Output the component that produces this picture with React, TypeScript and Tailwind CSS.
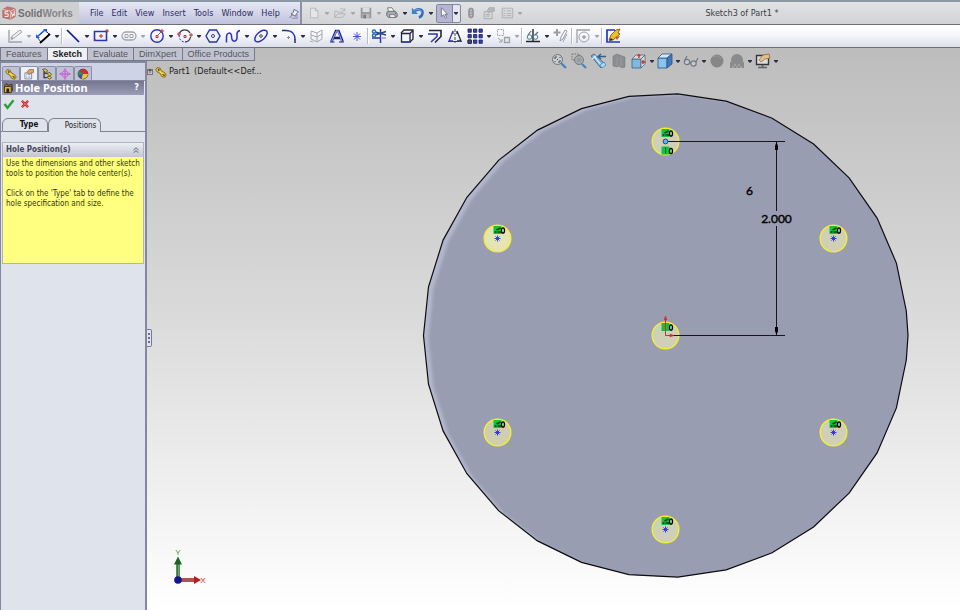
import type { ReactNode } from 'react';
import { clsx } from 'clsx';

const BLUE = '#2a35b8';
const GRAY = '#a2a4ab';

const glyphs: Record<string, ReactNode> = {
  newDoc: <path d="M4 2.5h5.5l3 3v8H4zM9.5 2.5v3h3" fill="#e6e6e8" stroke="#b4b5b9" />,
  open: (
    <g fill="none" stroke="#b0b1b5">
      <path d="M2 13V6h3l1 1h5v2M2 13l3-4h9l-3 4z" />
      <path d="M8 4c2-2 4-1 5 1M13.500 2.500v3h-3" />
    </g>
  ),
  save: (
    <g>
      <path d="M2 2h12v12H2z" fill="#96979c" />
      <path d="M4 2h8v5H4z" fill="#dcdde0" />
      <path d="M4 9h8v5H4z" fill="#b9babf" />
      <path d="M5 10h3v4H5z" fill="#77787d" />
    </g>
  ),
  print: (
    <g stroke="#55565c" strokeWidth=".8">
      <path d="M4 7l-1-5h5l3 5z" fill="#f4f5f8" />
      <path d="M2 7l3-1h7l2 3v3l-2 1H4l-2-2z" fill="#a9abb2" />
      <path d="M5 10h6l1 3H6z" fill="#fff" />
      <path d="M11.500 8.500h1" stroke="#27a" strokeWidth="1.500" />
    </g>
  ),
  undo: (
    <g fill="none">
      <path d="M4 6c4-4 10-2 9 3-.500 2-2 3.500-4 4" stroke="#2f6fb8" strokeWidth="3" />
      <path d="M1 2v7h7z" fill="#3a83cc" />
      <path d="M4 5.500c4-3 8-1.500 8 2" stroke="#8cc4f0" strokeWidth=".8" />
    </g>
  ),
  cursor: <path d="M5 2v10l2.500-2 2 4 1.500-1-2-3.500H12z" fill="#fff" stroke="#55566a" strokeWidth=".8" />,
  light: (
    <g>
      <rect x="5.500" y="2.500" width="5" height="11" rx="2" fill="#9c9da2" stroke="#85868c" />
      <path d="M7 5h2M7 8h2M7 11h2" stroke="#c6c7ca" strokeWidth="1.500" />
    </g>
  ),
  props: (
    <g fill="#d9dadd" stroke="#a6a7ac">
      <path d="M2.500 6.500h9v8h-9zM4 9.500h5M4 11.500h5" />
      <path d="M6 6l2-4h6v4h-4l-2 2z" fill="#b8b9bd" />
    </g>
  ),
  list: (
    <g fill="none" stroke="#aaabb0">
      <path d="M2.500 2.500h12v11h-12z" />
      <path d="M4 5.500h2M7.500 5.500H13M4 8.500h2M7.500 8.500H13M4 11h2M7.500 11H13" />
    </g>
  ),
  pin: (
    <g stroke="#44486a">
      <path d="M8 2l6 3-3 3-1 3-6-3 3-2z" fill="#eceef8" />
      <path d="M6 9l-4 4" fill="none" />
      <path d="M5 13.500h8M12 8v5" stroke="#777b98" fill="none" />
    </g>
  ),
  sketch: (
    <g fill="none" stroke={GRAY}>
      <path d="M2 2v12h13" strokeWidth="1.400" />
      <path d="M4 11l1-3 8-6 2 2-8 6z" fill="#eee" />
      <path d="M4 11l2-1" strokeWidth="2" />
    </g>
  ),
  dimension: (
    <g fill="none">
      <path d="M2 9l8-7 4 4-8 8z" stroke="#333653" fill="#fff" />
      <path d="M3 8l7-6" stroke="#1f5be0" strokeWidth="1.600" />
      <path d="M1 6v4h4zM8 1h4v4z" fill="#1f5be0" />
      <path d="M5 15l10-9" stroke="#000" strokeWidth="1.800" />
    </g>
  ),
  line: <path d="M2 2l12 12" stroke="#101a8c" strokeWidth="1.700" />,
  rect: (
    <g fill="none">
      <path d="M1.500 3.500h12v9h-12z" stroke={BLUE} strokeWidth="1.600" />
      <path d="M13 2h2v2h-2zM7 7h2v2H7zM1 12h2" stroke="#b03030" />
    </g>
  ),
  slot: (
    <g fill="none" stroke={GRAY}>
      <rect x="1" y="4" width="14" height="8" rx="4" strokeWidth="1.300" />
      <path d="M4 6.500h3v3H4zM9 6.500h3v3H9z" />
    </g>
  ),
  circle: (
    <g fill="none">
      <circle cx="8" cy="8" r="6.200" stroke={BLUE} strokeWidth="1.400" />
      <path d="M8 8l4.500-4.500" stroke="#666a90" />
      <path d="M7 7.500h2v2H7zM12 2h2v2h-2z" stroke="#c03030" />
    </g>
  ),
  arc: (
    <g fill="none">
      <path d="M2.500 5A6 6 0 0 1 13 5M13.500 9A6 6 0 0 1 8 14" stroke="#3a3d58" strokeWidth="1.300" />
      <path d="M2 7c0 4 2 7 6 7" stroke={BLUE} strokeDasharray="2 1.500" />
      <path d="M1 5h2v2H1zM13 6h2v2h-2zM7 7.500h2v2H7z" stroke="#b03030" />
    </g>
  ),
  polygon: (
    <g>
      <path d="M4.500 2h7L15 8l-3.500 6h-7L1 8z" fill="#eef0ff" stroke="#2a35a0" strokeWidth="1.400" />
      <circle cx="8" cy="8" r="1.500" fill="#fff" stroke="#333a78" />
    </g>
  ),
  spline: <path d="M1.500 14.500V9c0-5 5-5 5-1 0 7 5 6 5.500 2V6c0-2 .500-3 3-3.500" fill="none" stroke={BLUE} strokeWidth="1.500" />,
  ellipse: (
    <g fill="none" stroke={BLUE}>
      <ellipse cx="8" cy="8" rx="7.500" ry="4" transform="rotate(-42 8 8)" strokeWidth="1.500" />
      <circle cx="8" cy="8" r="1.300" stroke="#444" />
    </g>
  ),
  fillet: (
    <g fill="none" strokeWidth="1.500">
      <path d="M1 2.500h4M14 15v-4" stroke="#2e3046" />
      <path d="M5 2.500c6 0 9 4 9 9" stroke={BLUE} />
      <path d="M6 9.500h3M7.500 8v3" stroke="#8a8b90" strokeWidth="1" />
    </g>
  ),
  plane: (
    <g fill="none" stroke="#a6a8ae">
      <path d="M2 3l6 2v9l-6-3zM8 5l5-3v9l-5 3M2 7l6 2 5-3" />
      <path d="M1 13l3 1" />
    </g>
  ),
  letter: (
    <g fill="none">
      <path d="M2.500 13.500L7 3h2.500l4 10.500M5 10h6" stroke="#1a2070" strokeWidth="2.600" />
      <path d="M2.500 13.500L7.500 3h1.500l4 10.500" stroke="#8c9cf8" strokeWidth="1.200" />
      <path d="M1 14h4.500M10 14h5" stroke="#1a2070" />
    </g>
  ),
  point: <path d="M8 4v9M4 8.500h8M5 5.500l6 6M11 5.500l-6 6" stroke="#3a49c8" strokeWidth=".9" />,
  trim: (
    <g fill="none">
      <path d="M9.500 1v14M1 10h9" stroke={BLUE} strokeWidth="1.500" />
      <path d="M4 4l11 3M4 7l11-3.500" stroke="#26497f" strokeWidth="1.400" />
      <circle cx="3" cy="3.500" r="1.600" stroke="#2d71b0" strokeWidth="1.500" />
      <circle cx="3" cy="7.500" r="1.600" stroke="#2d71b0" strokeWidth="1.500" />
      <path d="M11 10h4" stroke="#777" />
    </g>
  ),
  convert: (
    <g fill="#f4f5fb" stroke="#23263a" strokeWidth="1.300">
      <path d="M2 5l3-3h9v9l-3 3" />
      <path d="M2.500 5.500H11V14H2.500zM11 5.500L14 2.500" />
      <path d="M3 14h8" stroke="#3342c0" />
    </g>
  ),
  offset: (
    <g fill="none" strokeWidth="1.600">
      <path d="M2 2.500h12v6L8 14.500" stroke="#23263a" />
      <path d="M1 6h9v2.500L4 14" stroke={BLUE} />
    </g>
  ),
  mirror: (
    <g fill="none" strokeWidth="1.300">
      <path d="M6 3L2 13h4M6 3v3" stroke={BLUE} />
      <path d="M10 3l4 10h-4M10 3v3" stroke="#23263a" />
      <path d="M8 1v14" stroke="#444" strokeDasharray="3 1" strokeWidth="1" />
      <path d="M1 13.500h14" stroke="#3b4070" strokeWidth="1" />
    </g>
  ),
  pattern: (
    <g fill="#3a44b0" stroke="#151a5c" strokeWidth=".8">
      {[1, 6.5, 12].map((x) => [1, 6.5, 12].map((y) => <path key={`${x}-${y}`} d={`M${x} ${y}h3.300v3.300h-3.300z`} />))}
      <path d="M1 12h3.300v3.300H1z" fill="#555" />
    </g>
  ),
  move: (
    <g fill="none" stroke="#a0a2a8">
      <path d="M2.500 1.500h6v6h-6z" strokeDasharray="2 1" />
      <path d="M9.500 9.500h5v5h-5z" fill="#e6e7ea" strokeWidth="1.300" />
      <path d="M3 10l4 3.500M7 11v3H4" />
    </g>
  ),
  relations: (
    <g fill="none">
      <path d="M8 1v12M1 13.500h14" stroke="#22242e" strokeWidth="1.400" />
      <circle cx="4.500" cy="9" r="2.300" stroke="#4b7596" />
      <circle cx="10.500" cy="9" r="2.300" stroke="#4b7596" />
      <path d="M3 7l3-4M10 7l3-3" stroke="#5a6d80" strokeWidth="1.200" />
    </g>
  ),
  repair: (
    <g fill="none" stroke="#9b9da5">
      <path d="M4 1v7M.5 4.500h7" strokeWidth="2" />
      <path d="M7 13l1-4 4-7 2 1-4 8zM10 14l4-8" />
    </g>
  ),
  snaps: (
    <g fill="none" stroke="#9fa1a8">
      <path d="M2 15V2h13" strokeWidth="1.300" />
      <circle cx="9" cy="9" r="5" />
      <circle cx="9" cy="9" r="1.300" fill="#9fa1a8" />
    </g>
  ),
  rapid: (
    <g>
      <path d="M10 2H2v12h13" fill="none" stroke={BLUE} strokeWidth="1.700" />
      <path d="M4 12l2-5 5-5 4-1-2 4 2 1-7 6z" fill="#f0c020" stroke="#6a4a10" strokeWidth=".8" />
      <path d="M10 9l5-1-3 4z" fill="#c05a48" />
      <path d="M4 13l2-3 2 2z" fill="#222" />
    </g>
  ),
  zoomFit: (
    <g fill="none">
      <path d="M10 10l5 5" stroke="#4b7fc0" strokeWidth="2.200" />
      <circle cx="6.500" cy="6.500" r="5" fill="#c9ccd0" stroke="#70747a" />
      <path d="M4 6V4h2M9 7v2H7M4 8v1M9 4v1M6 6.500h1" stroke="#4c5056" />
    </g>
  ),
  zoomArea: (
    <g fill="none">
      <path d="M11 11l4 4" stroke="#4b7fc0" strokeWidth="2.200" />
      <path d="M1 1h7v6H1z" stroke="#777" strokeDasharray="1.500 1" />
      <circle cx="8" cy="7" r="4.500" fill="#a6a9ac" stroke="#777b80" />
      <path d="M6 6h4M6 8h4" stroke="#8a8d92" />
    </g>
  ),
  previous: (
    <g>
      <path d="M0 3l3-2 10 9-3 5z" fill="#79aede" stroke="#2e5e92" strokeWidth=".8" />
      <path d="M3 3l7 9M1 6l4-3" stroke="#d4ecfc" strokeWidth="1.300" />
      <path d="M7 3.500h8M10 1L7 3.500 10 6" stroke="#345f8c" fill="none" strokeWidth="1.300" />
      <path d="M9 12l4-3 2 3-4 3z" fill="#a9dcf2" stroke="#3f79a4" strokeWidth=".7" />
    </g>
  ),
  section: (
    <g fill="#8b8d90" stroke="#7a7c7f" strokeWidth=".6">
      <path d="M2 3l4-2 8 3v10l-3 1-3-2-2 1-4-1z" />
      <path d="M6 4v9M10 5v8" stroke="#a2a4a6" />
    </g>
  ),
  viewCube: (
    <g strokeWidth=".8">
      <path d="M1 6h9v9H1z" fill="#7fb8e2" stroke="#35628c" />
      <path d="M1 6l4-4h9l-4 4zM10 6l4-4v9l-4 4z" fill="#d7dadd" stroke="#5d6874" />
      <path d="M8 1v4M6.500 2.500h3M12 7v4M10.500 9h4" stroke="#c03838" strokeWidth="1.400" />
    </g>
  ),
  shadedCube: (
    <g strokeWidth=".8" stroke="#2d5484">
      <path d="M1 5h9v10H1z" fill="#8cc3ee" />
      <path d="M1 5l4-4h10l-5 4z" fill="#cfe8fb" />
      <path d="M10 5l5-4v10l-5 4z" fill="#4078b8" />
    </g>
  ),
  glasses: (
    <g fill="none" stroke="#74787e" strokeWidth="1.200">
      <circle cx="4" cy="9" r="2.700" fill="#c0cad2" />
      <circle cx="10.500" cy="10.500" r="2.700" fill="#c0cad2" />
      <path d="M1.500 8L4 3M13 9l2-4M6.500 9l1.500 1" />
    </g>
  ),
  sphere: (
    <g>
      <circle cx="8" cy="8" r="6.500" fill="#868686" />
      <path d="M4 4c3-2 6-1 8 2" stroke="#999" fill="none" />
    </g>
  ),
  scene: (
    <g fill="#8a8b8d">
      <circle cx="8" cy="7" r="6" />
      <path d="M1 9h14v6H1z" />
      <path d="M3 13h2v2H3zM7 13h2v2H7zM11 13h2v2h-2zM5 11h2v2H5zM9 11h2v2H9z" fill="#a2a2a2" />
    </g>
  ),
  monitor: (
    <g>
      <path d="M1.500 2.500h12v9h-12z" fill="#d9dde2" stroke="#33363c" strokeWidth="1.400" />
      <path d="M3 14.500h9M7.500 12v2" stroke="#606368" strokeWidth="1.600" />
      <path d="M4 7l4-5 6-1 1 4-5 1-4 3z" fill="#e2c084" stroke="#866430" strokeWidth=".7" />
    </g>
  ),
  part: (
    <g stroke="#5e4a08" strokeWidth=".9">
      <path d="M1 5l2-3 4 1 1 3 5 3 2 3-2 3-4-1-2-4-4-2z" fill="#e8c428" />
      <path d="M4 4l3 3M9 10l3 2M3 5l8 6" stroke="#fff2a0" fill="none" />
      <path d="M4 4l2 1-1 2zM10 11l3 1-1 1z" fill="#5e4a08" />
    </g>
  ),
  property: (
    <g>
      <path d="M2.500 6.500h9v8h-9z" fill="#fbfbfd" stroke="#6c6e80" />
      <path d="M4 9h2M7 9h3M4 12h2M7 12h3" stroke="#5470b0" />
      <path d="M5 6l3-4h6v4l-4 1-2 1z" fill="#d6a870" stroke="#7b5224" strokeWidth=".8" />
    </g>
  ),
  config: (
    <g>
      <path d="M4 4v9h4M4 7h5" stroke="#222" fill="none" strokeWidth="1.400" />
      <path d="M2 2l4-1 3 3-3 2z" fill="#e2c63a" stroke="#4d4210" />
      <path d="M8 7l4-1 2 3-3 2zM8 12l4-1 2 2-3 2z" fill="#e9cc30" stroke="#4d4210" />
    </g>
  ),
  target: (
    <g fill="none" stroke="#c46ad0" strokeWidth="1.300">
      <path d="M8 1v14M1 8h14" strokeWidth="1.800" />
      <circle cx="8" cy="8" r="4" />
      <path d="M6 3l2-2 2 2M6 13l2 2 2-2M3 6L1 8l2 2M13 6l2 2-2 2" />
    </g>
  ),
  display: (
    <g>
      <circle cx="8" cy="8" r="6.500" fill="#3054c4" stroke="#333" />
      <path d="M8 8V1.500A6.500 6.500 0 0 1 14.500 8z" fill="#d02f2a" />
      <path d="M8 8H14.500A6.500 6.500 0 0 1 6 14z" fill="#f0c82a" />
      <path d="M8 8V1.500A6.500 6.500 0 0 0 3 4z" fill="#d02f2a" />
      <path d="M8 8L3 4A6 6 0 0 0 2 10z" fill="#2f9848" />
    </g>
  ),
  hole: (
    <g>
      <path d="M2 5h10v9H2z" fill="#e0bc30" stroke="#30280a" strokeWidth="1.300" />
      <path d="M5 8h4v6H5z" fill="#222" />
      <path d="M2 4l3-3 3 3M8 3l5-1 1 10" fill="none" stroke="#503c10" strokeWidth="1.500" />
    </g>
  ),
  check: <path d="M2 8l4 5 8-10" fill="none" stroke="#2aa03a" strokeWidth="3.200" />,
  cross: (
    <g fill="none">
      <path d="M3 3l10 10M13 3L3 13" stroke="#c8242c" strokeWidth="3.600" />
      <path d="M3 3l10 10M13 3L3 13" stroke="#f4aaa8" strokeWidth=".8" />
    </g>
  ),
  cubeLogo: (
    <g>
      <path d="M1 4l5-3 9 2v9l-5 3-9-2z" fill="#c07672" stroke="#a06a68" />
      <path d="M1 4l9 2v9M10 6l5-3" stroke="#ecd0ce" fill="none" />
      <path d="M7 6.500H3.500V9H7v3H3M11 7l1 5 1-3 1 2V5" stroke="#fff" fill="none" />
    </g>
  ),
};

function Glyph({ name, className = 'size-4' }: { name: string; className?: string }) {
  return (
    <svg viewBox="0 0 16 16" className={clsx('shrink-0', className)} aria-hidden="true">
      {glyphs[name]}
    </svg>
  );
}

function Caret({ muted }: { muted?: boolean }) {
  return (
    <svg viewBox="0 0 4 3" className="h-[3px] w-1" aria-hidden="true">
      <path d="M0 0h4v1L2 3 0 1z" fill={muted ? '#a5a6ad' : '#2c2e44'} />
    </svg>
  );
}

interface Tool {
  icon: string;
  label: string;
  menu?: boolean;
  muted?: boolean;
  sep?: boolean;
}

const fileTools: Tool[] = [
  { icon: 'newDoc', label: 'New', menu: true, muted: true },
  { icon: 'open', label: 'Open', menu: true, muted: true },
  { icon: 'save', label: 'Save', menu: true, muted: true },
  { icon: 'print', label: 'Print', menu: true },
  { icon: 'undo', label: 'Undo', menu: true },
];

const optionTools: Tool[] = [
  { icon: 'light', label: 'Rebuild' },
  { icon: 'props', label: 'File Properties' },
  { icon: 'list', label: 'Options', menu: true, muted: true },
];

const sketchTools: Tool[] = [
  { icon: 'sketch', label: 'Sketch', menu: true, muted: true },
  { icon: 'dimension', label: 'Smart Dimension', menu: true, sep: true },
  { icon: 'line', label: 'Line', menu: true },
  { icon: 'rect', label: 'Rectangle', menu: true },
  { icon: 'slot', label: 'Slot', menu: true, muted: true },
  { icon: 'circle', label: 'Circle', menu: true },
  { icon: 'arc', label: 'Arc', menu: true },
  { icon: 'polygon', label: 'Polygon' },
  { icon: 'spline', label: 'Spline', menu: true },
  { icon: 'ellipse', label: 'Ellipse', menu: true },
  { icon: 'fillet', label: 'Fillet', menu: true },
  { icon: 'plane', label: 'Plane' },
  { icon: 'letter', label: 'Text' },
  { icon: 'point', label: 'Point', sep: true },
  { icon: 'trim', label: 'Trim Entities', menu: true },
  { icon: 'convert', label: 'Convert Entities', menu: true },
  { icon: 'offset', label: 'Offset Entities' },
  { icon: 'mirror', label: 'Mirror Entities' },
  { icon: 'pattern', label: 'Linear Pattern', menu: true },
  { icon: 'move', label: 'Move Entities', menu: true, muted: true, sep: true },
  { icon: 'relations', label: 'Display Relations', menu: true },
  { icon: 'repair', label: 'Repair Sketch', sep: true },
  { icon: 'snaps', label: 'Quick Snaps', menu: true, muted: true, sep: true },
  { icon: 'rapid', label: 'Rapid Sketch' },
];

const viewTools: Tool[] = [
  { icon: 'zoomFit', label: 'Zoom to Fit' },
  { icon: 'zoomArea', label: 'Zoom to Area' },
  { icon: 'previous', label: 'Previous View' },
  { icon: 'section', label: 'Section View' },
  { icon: 'viewCube', label: 'View Orientation', menu: true },
  { icon: 'shadedCube', label: 'Display Style', menu: true },
  { icon: 'glasses', label: 'Hide/Show Items', menu: true },
  { icon: 'sphere', label: 'Edit Appearance' },
  { icon: 'scene', label: 'Apply Scene', menu: true },
  { icon: 'monitor', label: 'View Settings', menu: true },
];

function ToolButtons({ tools, iconWidth, caretWidth, size }: { tools: Tool[]; iconWidth: string; caretWidth: string; size?: string }) {
  return (
    <>
      {tools.map((t) => (
        <div key={t.icon} className="flex shrink-0 items-center">
          <button type="button" aria-label={t.label} className={clsx('flex justify-center', iconWidth)}>
            <Glyph name={t.icon} className={size} />
          </button>
          {t.menu && (
            <button type="button" aria-label={`${t.label} menu`} className={clsx('flex h-4 items-center justify-center', caretWidth)}>
              <Caret muted={t.muted} />
            </button>
          )}
          {t.sep && <span className="h-4 w-[2px] border-l border-[#b9bbc8] bg-white" />}
        </div>
      ))}
    </>
  );
}

function MenuBar() {
  const menus = ['File', 'Edit', 'View', 'Insert', 'Tools', 'Window', 'Help'];
  return (
    <header className="flex h-[25px] items-stretch border-t-2 border-b border-t-[#8e98a4] border-b-[#6d6e76] bg-linear-to-b from-[#e2e3e5] to-[#d2d3d6] text-[9px]">
      <div className="flex w-[79px] items-center gap-[2px] bg-[#cfcfd0] pl-[2px]">
        <Glyph name="cubeLogo" className="size-[14px]" />
        <span className="font-['Liberation_Sans'] text-[10px] font-bold text-[#6f7074]">
          Solid<span className="text-[#85868a]">Works</span>
        </span>
      </div>
      <nav className="flex items-center gap-2 border-r-2 border-[#8f90a4] bg-linear-to-b from-[#e6e8f5] to-[#c0c3dc] pt-[2px] pl-[11px] text-[#2c2c62]">
        {menus.map((m) => (
          <button key={m} type="button">
            {m}
          </button>
        ))}
        <button type="button" aria-label="Pin menu">
          <Glyph name="pin" className="size-3" />
        </button>
      </nav>
      <div className="flex items-center pl-[3px]">
        <ToolButtons tools={fileTools} iconWidth="w-[18px]" caretWidth="w-2" size="size-[14px]" />
        <div className="mx-[1px] flex h-[19px] w-[25px] items-stretch rounded-[2px] border border-[#85869c] bg-[#e4e5ee]">
          <button type="button" aria-label="Select" className="flex flex-1 items-center justify-center border-r border-[#85869c] bg-[#b4b5d4]">
            <Glyph name="cursor" className="size-[14px]" />
          </button>
          <button type="button" aria-label="Select menu" className="flex w-[7px] items-center justify-center">
            <Caret />
          </button>
        </div>
        <ToolButtons tools={optionTools} iconWidth="w-[18px]" caretWidth="w-2" size="size-[14px]" />
      </div>
      <h1 className="flex flex-1 items-center justify-center pt-[2px] text-[#3c3d42]">Sketch3 of Part1 *</h1>
    </header>
  );
}

function CommandTabs() {
  const tabs = ['Features', 'Sketch', 'Evaluate', 'DimXpert', 'Office Products'];
  return (
    <div role="tablist" className="flex h-[13px] w-max border-r border-[#77798a] font-['Liberation_Sans'] text-[9px] leading-3">
      {tabs.map((t) => (
        <button
          key={t}
          type="button"
          role="tab"
          aria-selected={t === 'Sketch'}
          className={clsx(
            'border-b border-l border-[#77798a] px-[5px]',
            t === 'Sketch' ? 'bg-[#f0f1f6] font-bold text-[#222]' : 'bg-[#c0c2d0] text-[#55565e]',
          )}
        >
          {t}
        </button>
      ))}
    </div>
  );
}

function PropertyManager() {
  const managers = ['part', 'property', 'config', 'target', 'display'];
  return (
    <section className="flex-1 border-t-2 border-r-2 border-l border-[#8587a0] bg-[#dfe3ec]">
      <div className="flex h-[18px] items-end border-b border-[#8587a0] bg-[#cfd3e6] pl-[1px]">
        {managers.map((m) => (
          <button
            key={m}
            type="button"
            aria-label={`${m} manager`}
            className={clsx(
              'flex h-[14px] w-[18px] items-center justify-center rounded-t-[2px] border border-b-0 border-[#8d8fa6]',
              m === 'property' ? 'bg-[#eef0f6]' : 'bg-[#bfc2d6]',
            )}
          >
            <Glyph name={m} className="size-3" />
          </button>
        ))}
      </div>
      <div className="mx-[1px] flex h-[14px] items-center gap-[1px] bg-linear-to-b from-[#74768f] to-[#9b9db8] px-[1px] font-bold text-white">
        <Glyph name="hole" className="size-[11px]" />
        <h2 className="flex-1 font-['Noto_Sans'] text-[11px]">Hole Position</h2>
        <button type="button" aria-label="Help" className="pr-1 text-[9px]">
          ?
        </button>
      </div>
      <div className="flex h-[23px] items-start gap-[4px] pt-[3px] pl-[2px]">
        <button type="button" aria-label="OK">
          <Glyph name="check" className="size-3" />
        </button>
        <button type="button" aria-label="Cancel" className="p-[1px]">
          <Glyph name="cross" className="size-[10px]" />
        </button>
      </div>
      <div role="tablist" className="flex h-[14px] items-stretch">
        <span className="w-[1px] border-b border-[#80828f]" />
        <button type="button" role="tab" className="w-[46px] rounded-t-[6px] border border-[#80828f] pl-2 font-bold text-[#111]">
          Type
        </button>
        <button type="button" role="tab" aria-selected className="w-[53px] rounded-t-[6px] border border-b-0 border-[#80828f] pl-3 text-[#222]">
          Positions
        </button>
        <span className="flex-1 border-b border-[#80828f]" />
      </div>
      <div className="mx-[1px] mt-[10px] border border-[#b0b3c0]">
        <div className="flex h-[14px] items-center justify-between bg-linear-to-b from-[#eceef3] to-[#c3c6d2] px-[3px]">
          <h3 className="font-bold text-[#45465c]">Hole Position(s)</h3>
          <button type="button" aria-label="Collapse" className="pr-[1px]">
            <svg viewBox="0 0 6 6" className="size-[6px]" aria-hidden="true">
              <path d="M.5 3L3 .8 5.500 3M.5 5.800L3 3.600l2.500 2.200" fill="none" stroke="#45465c" strokeWidth=".8" />
            </svg>
          </button>
        </div>
        <div className="h-[106px] space-y-[10px] bg-[#ffff80] pt-[2px] pl-[3px] leading-[10px] text-[#33331c]">
          <p>Use the dimensions and other sketch tools to position the hole center(s).</p>
          <p>Click on the 'Type' tab to define the hole specification and size.</p>
        </div>
      </div>
    </section>
  );
}

const CX = 665.5;
const CY = 335.5;

// the disc is tessellated into 31 facets, with a seam vertex on the right
const facets = Array.from({ length: 31 }, (_, i) => {
  const a = Math.PI + (i * 2 * Math.PI) / 31;
  return `${(CX + 242 * Math.cos(a)).toFixed(1)},${(CY + 242 * Math.sin(a)).toFixed(1)}`;
});
const outline = [...facets.slice(0, 16), `${CX + 242.5},${CY}`, ...facets.slice(16)].join(' ');

const holes = [
  { x: 665.5, y: 141.5, fill: '#cfd0b6' },
  { x: 497.5, y: 238.5, fill: '#e5e4b4' },
  { x: 833.5, y: 238.5, fill: '#cfd0b6' },
  { x: 665.5, y: 335.5, fill: '#cfd0b6' },
  { x: 497.5, y: 432.5, fill: '#cfceb0' },
  { x: 833.5, y: 432.5, fill: '#cfd0b6' },
  { x: 665.5, y: 529.5, fill: '#cfd0b6' },
];

function Relation({ x, y, vertical }: { x: number; y: number; vertical?: boolean }) {
  return (
    <g>
      <rect x={x - 4} y={y} width="8" height="8" fill="#12c23e" />
      {vertical ? (
        <path d={`M${x} ${y + 1}v6`} stroke="#0a5a20" />
      ) : (
        <path d={`M${x - 3} ${y + 6}h2M${x} ${y + 6}h4M${x - 1} ${y + 4}l4-2`} stroke="#0b3d18" strokeWidth="1.600" fill="none" />
      )}
      <ellipse cx={x + 5.5} cy={y + 4.5} rx="1.500" ry="2.700" fill="none" stroke="#000" strokeWidth="1.300" />
    </g>
  );
}

function Model() {
  return (
    <svg viewBox="147 48 813 562" className="h-full w-full [grid-area:1/1]" role="img" aria-label="Sketch of the part">
      <defs>
        <clipPath id="disc">
          <polygon points={outline} />
        </clipPath>
        <filter id="soft">
          <feGaussianBlur stdDeviation="1.5" />
        </filter>
      </defs>
      <g clipPath="url(#disc)">
        <polygon points={outline} fill="#b3b7cd" />
        <polygon points={outline} fill="#999db2" stroke="#999db2" strokeWidth="2" transform="translate(6 2)" filter="url(#soft)" />
      </g>
      <polygon points={outline} fill="none" stroke="#0c0c10" strokeWidth="1.200" />
      {holes.map((h) => (
        <circle key={`${h.x}-${h.y}`} cx={h.x} cy={h.y} r="13.300" fill={h.fill} stroke="#f2ee35" strokeWidth="1.400" />
      ))}
      {holes.map((h) => {
        const middle = h.x === CX && h.y === CY;
        const first = h.y === 141.5;
        return (
          <g key={`${h.x}-${h.y}`}>
            <Relation x={h.x} y={h.y - 12.5} vertical={middle} />
            {first && <Relation x={h.x} y={h.y + 5} vertical />}
            {!middle && !first && (
              <path
                d={`M${h.x} ${h.y - 3}v6M${h.x - 3} ${h.y}h6M${h.x - 2} ${h.y - 2}l4 4M${h.x + 2} ${h.y - 2}l-4 4`}
                stroke="#2a2ee0"
                strokeWidth=".9"
              />
            )}
          </g>
        );
      })}
      <g stroke="#15151c" fill="none">
        <path d="M668 141.500H785M672 335.500H785" />
        <path d="M776.500 142V211M776.500 226V335" />
      </g>
      <path d="M776.500 142l1.500 4v4h-3v-4zM776.500 335l1.500-4v-4h-3v4z" fill="#000" />
      <circle cx={CX} cy="141.500" r="2.400" fill="#6aaef0" stroke="#174a80" />
      <g stroke="#d8283a" fill="#d8283a">
        <path d={`M${CX} ${CY}V318M${CX} ${CY}H672`} fill="none" />
        <path d="M665.500 316l1.500 4h-3zM674 335.500l-4 1.500v-3z" strokeWidth=".5" />
      </g>
      <g fontFamily="Lato" fontSize="12" fill="#000" stroke="#000" strokeWidth=".4" textAnchor="middle">
        <text x="749.500" y="195">6</text>
        <text x="776.500" y="223">2.000</text>
      </g>
      {/* view triad */}
      <path d="M178 578V564" stroke="#2a6e2e" strokeWidth="3.500" />
      <path d="M178.300 578V564" stroke="#76b27a" />
      <path d="M178 556.500l4 8h-8z" fill="#1c6422" />
      <path d="M180 580h14" stroke="#8e2020" strokeWidth="3.500" />
      <path d="M180 580h14" stroke="#d88080" />
      <path d="M201 580l-7 4v-8z" fill="#b81c1c" />
      <circle cx="178" cy="580" r="3.800" fill="#14148c" />
      <g fontFamily="Liberation Sans" fontSize="8" textAnchor="middle">
        <text x="178" y="555" fill="#2c9a34">Y</text>
        <text x="203" y="583" fill="#e03030">X</text>
      </g>
    </svg>
  );
}

export default function App() {
  return (
    <div className="flex min-h-screen flex-col font-['DejaVu_Sans_Condensed','DejaVu_Sans',sans-serif] text-[8px]">
      <MenuBar />
      <div className="flex h-[23px] items-center border-b border-[#6d6f7c] bg-linear-to-b from-white via-[#f5f6fb] to-[#dcdeea] pl-[5px]">
        <ToolButtons tools={sketchTools} iconWidth="w-5" caretWidth="w-2" />
      </div>
      <main className="flex flex-1 bg-linear-to-b from-[#bdbdbd] via-[#dcdcdc] to-white">
        <aside className="relative z-10 flex w-[147px] shrink-0 flex-col">
          <CommandTabs />
          <PropertyManager />
          <button
            type="button"
            aria-label="Resize panel"
            className="absolute top-1/2 left-full flex h-[18px] w-[5px] flex-col items-center justify-center gap-[2px] rounded-r-[2px] border border-l-0 border-[#77798e] bg-[#dfe3ec]"
          >
            <span className="size-[2px] bg-[#6a6c98]" />
            <span className="size-[2px] bg-[#6a6c98]" />
            <span className="size-[2px] bg-[#6a6c98]" />
          </button>
        </aside>
        <div className="grid min-w-0 flex-1">
          <Model />
          <div className="flex flex-col [grid-area:1/1]">
            <div className="flex h-[17px] items-start pt-[5px] pl-[49.5%]">
              <ToolButtons tools={viewTools} iconWidth="w-5" caretWidth="w-[6px]" />
            </div>
            <div className="flex items-center gap-[2px] text-[9px] text-[#222]">
              <span className="flex size-[6px] items-center justify-center border border-[#77787c] text-[7px] leading-none">+</span>
              <Glyph name="part" className="size-3" />
              <span>Part1</span>
              <span className="pl-[2px]">(Default&lt;&lt;Def...</span>
            </div>
          </div>
        </div>
      </main>
    </div>
  );
}
